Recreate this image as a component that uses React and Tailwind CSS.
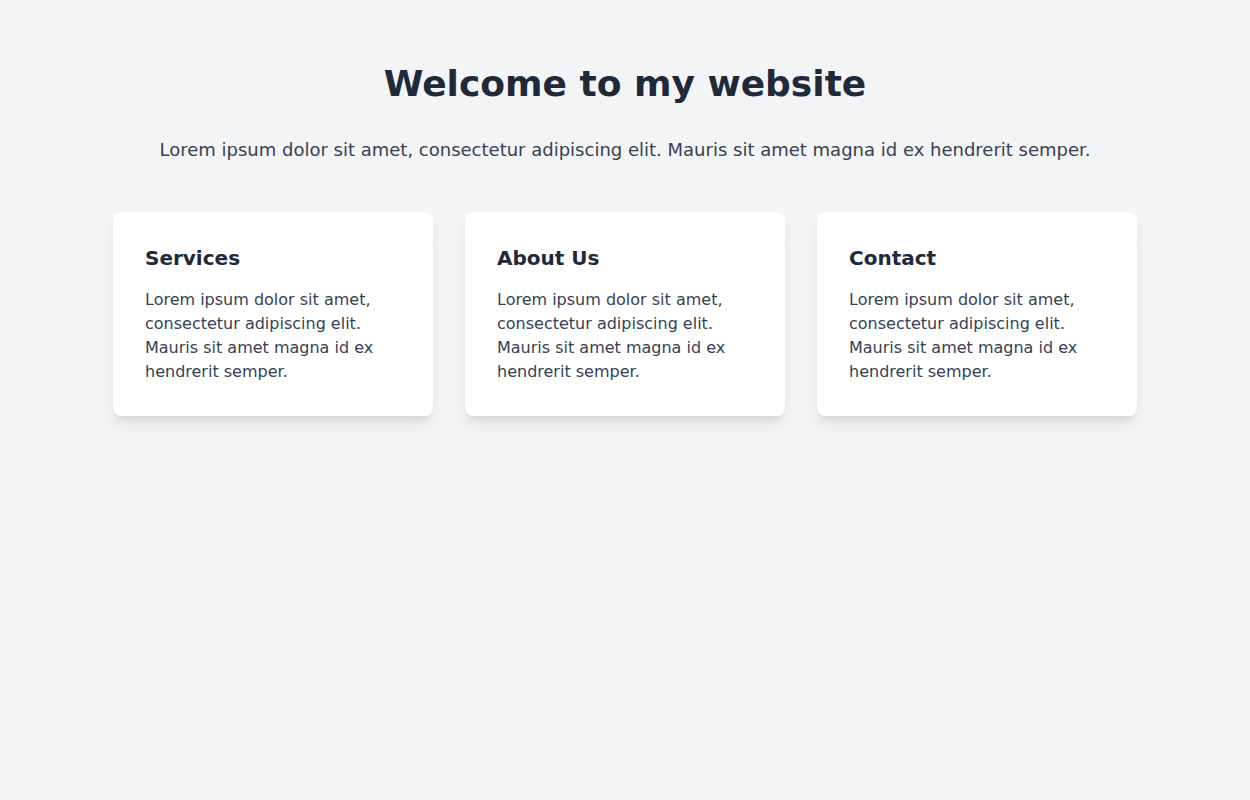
export default function App() {
  const cards = ["Services", "About Us", "Contact"];
  return (
    <div className="min-h-screen bg-gray-100 font-['DejaVu_Sans',sans-serif]">
      <div className="max-w-5xl mx-auto py-16">
        <h1 className="text-4xl font-bold text-gray-800 text-center mb-8">Welcome to my website</h1>
        <p className="text-lg text-gray-700 text-center mb-12">
          Lorem ipsum dolor sit amet, consectetur adipiscing elit. Mauris sit amet magna id ex hendrerit semper.
        </p>
        <div className="grid grid-cols-3 gap-8">
          {cards.map((c) => (
            <div key={c} className="bg-white rounded-lg shadow-lg p-8">
              <h2 className="text-xl font-bold text-gray-800 mb-4">{c}</h2>
              <p className="text-base text-gray-700">
                Lorem ipsum dolor sit amet, consectetur adipiscing elit. Mauris sit amet magna id ex hendrerit semper.
              </p>
            </div>
          ))}
        </div>
      </div>
    </div>
  );
}
